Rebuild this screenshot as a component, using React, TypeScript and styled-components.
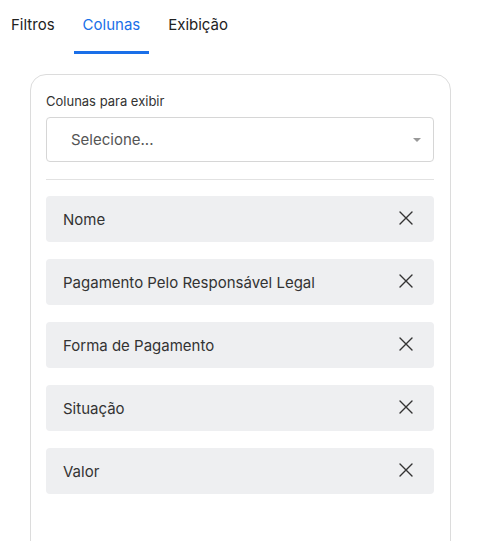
import React from "react"
import styled, { createGlobalStyle } from "styled-components"

const tabs = ["Filtros", "Colunas", "Exibição"]
const columns = [
  "Nome",
  "Pagamento Pelo Responsável Legal",
  "Forma de Pagamento",
  "Situação",
  "Valor",
]

const CloseIcon = () => (
  <svg width="14" height="14" viewBox="0 0 14 14" fill="none">
    <path d="M1 1L13 13M13 1L1 13" stroke="#333" strokeWidth="1.4" strokeLinecap="round" />
  </svg>
)

const App = () => {
  return (
    <>
      <GlobalStyle />
      <Page>
        <Tabs>
          {tabs.map((t) => (
            <Tab key={t} $active={t === "Colunas"}>
              {t}
            </Tab>
          ))}
        </Tabs>
        <Card>
          <Label>Colunas para exibir</Label>
          <Select>
            <Placeholder>Selecione...</Placeholder>
            <Caret />
          </Select>
          <Divider />
          <List>
            {columns.map((c) => (
              <Item key={c}>
                <ItemText>{c}</ItemText>
                <RemoveButton>
                  <CloseIcon />
                </RemoveButton>
              </Item>
            ))}
          </List>
        </Card>
      </Page>
    </>
  )
}

export default App

const GlobalStyle = createGlobalStyle`
  html, body {
    margin: 0;
    padding: 0;
    overflow: hidden;
    background: #fff;
  }
  body {
    font-family: Inter, "Noto Sans", sans-serif;
    color: #333;
  }
`

const Page = styled.div`
  width: 480px;
`

const Tabs = styled.div`
  display: flex;
  gap: 10px;
  padding-left: 2px;
`

const Tab = styled.div<{ $active?: boolean }>`
  padding: 15px 9px 16px;
  font-size: 15px;
  line-height: 20px;
  color: ${({ $active }) => ($active ? "#1a6fe8" : "#222")};
  border-bottom: 3px solid ${({ $active }) => ($active ? "#1a6fe8" : "transparent")};
  cursor: pointer;
`

const Card = styled.div`
  margin: 20px 29px 0 30px;
  border: 1px solid #dcdcdc;
  border-radius: 16px;
  padding: 17px 16px 80px 15px;
`

const Label = styled.div`
  font-size: 13px;
  line-height: 18px;
  color: #333;
`

const Select = styled.div`
  margin-top: 7px;
  height: 45px;
  box-sizing: border-box;
  border: 1px solid #d6d6d6;
  border-radius: 4px;
  display: flex;
  align-items: center;
  justify-content: space-between;
  padding: 0 12px 0 24px;
`

const Placeholder = styled.span`
  font-size: 15px;
  color: #555;
`

const Caret = styled.span`
  width: 0;
  height: 0;
  border-left: 4px solid transparent;
  border-right: 4px solid transparent;
  border-top: 4px solid #999;
`

const Divider = styled.div`
  height: 1px;
  background: #e2e2e2;
  margin: 17px 0 16px;
`

const List = styled.div`
  display: flex;
  flex-direction: column;
  gap: 17px;
`

const Item = styled.div`
  height: 46px;
  background: #eeeff1;
  border-radius: 4px;
  display: flex;
  align-items: center;
  justify-content: space-between;
  padding: 0 21px 0 17px;
`

const ItemText = styled.span`
  font-size: 15px;
  color: #333;
`

const RemoveButton = styled.button`
  border: none;
  background: none;
  padding: 0;
  display: flex;
  margin-top: -3px;
  cursor: pointer;
`
